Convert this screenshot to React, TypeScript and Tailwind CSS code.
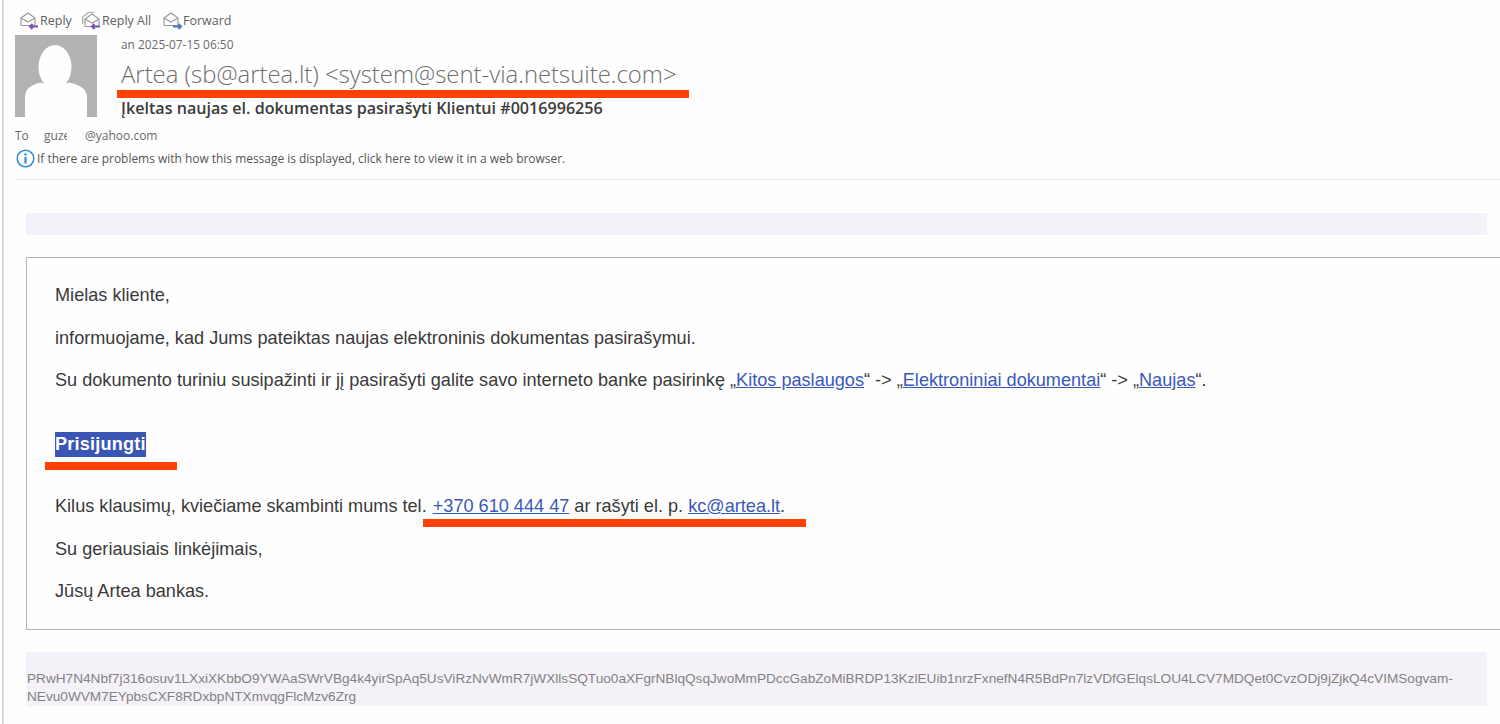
const Arrow = ({ color, dir }: { color: string; dir: "left" | "right" }) => (
  <path d={dir === "left" ? "M18 15.500h-8M12.500 13l-2.500 2.500 2.500 2.500" : "M10 15.500h8M15.500 13l2.500 2.500-2.500 2.500"} stroke={color} strokeWidth="2" fill="none" />
);

const Envelope = () => (
  <g fill="none" stroke="#9a9a9a" strokeWidth="1.200">
    <path d="M1 7 8 2l7 5v6.500a1 1 0 0 1-1 1H2a1 1 0 0 1-1-1z" />
    <path d="M1 7l7 4 7-4" />
  </g>
);

function ActionIcon({ kind }: { kind: "reply" | "all" | "forward" }) {
  return (
    <svg width="20" height="20" viewBox="0 0 20 20" className="shrink-0">
      {kind === "all" && <path d="M.7 13V6L6 1.500h6" fill="none" stroke="#a8a8a8" strokeWidth="1.200" />}
      <g transform={kind === "all" ? "translate(2 1)" : undefined}><Envelope /></g>
      <Arrow color={kind === "forward" ? "#4a78b8" : "#7a4fb5"} dir={kind === "forward" ? "right" : "left"} />
    </svg>
  );
}

function Action({ kind, label, className }: { kind: "reply" | "all" | "forward"; label: string; className: string }) {
  return (
    <div className={`flex items-center ${className}`}>
      <ActionIcon kind={kind} />
      <span className="text-[12.5px] leading-none text-[#5f5f5f]">{label}</span>
    </div>
  );
}

function Mark({ className }: { className: string }) {
  return <div className={`absolute h-2 bg-[#ff4106] ${className}`} />;
}

const linkCls = "text-[#3a58bb] underline";

export default function App() {
  return (
    <div className="relative h-[724px] w-[1500px] overflow-hidden bg-[#fefefe] font-['Liberation_Sans',Arial,sans-serif]">
      <div className="h-full border-l-2 border-[#d9d9d9] ml-[2px]">
        <header className="ml-[11px] h-[180px] border-b border-[#e4e4e4] font-['Open_Sans','Noto_Sans',sans-serif]">
          <div className="flex h-[35px] items-start pl-[5px] pt-[11px]">
            <Action kind="reply" label="Reply" className="w-[62px]" />
            <Action kind="all" label="Reply All" className="w-[81px]" />
            <Action kind="forward" label="Forward" className="w-[80px]" />
          </div>
          <div className="flex">
            <svg width="82" height="82" viewBox="0 0 82 82" className="shrink-0 bg-[#b2b2b2]">
              <ellipse cx="40" cy="32" rx="16.500" ry="22" fill="#fefefe" />
              <path d="M10 82V62c0-8 6-12 14-14 6-1.500 10 4 16 4s10-5.500 16-4c9 2 16 6 16 14v20z" fill="#fefefe" />
            </svg>
            <div className="ml-[24px] min-w-0">
              <div className="mt-[1px] text-[11.900px] leading-[16px] text-[#6a6a6a]">an 2025-07-15 06:50</div>
              <div className="mt-[5px] whitespace-nowrap text-[23.880px] font-light leading-[34px] text-[#6e6e6e]">
                Artea (sb@artea.lt) &lt;system@sent-via.netsuite.com&gt;
              </div>
              <div className="mt-[6px] whitespace-nowrap text-[16.130px] font-semibold leading-[22px] text-[#3b3b3b]">
                Įkeltas naujas el. dokumentas pasirašyti Klientui #0016996256
              </div>
            </div>
          </div>
          <div className="mt-[9px] flex text-[12px] leading-[16px] text-[#6a6a6a]">
            <span className="w-[29px]">To</span>
            <span className="mr-[18px] w-[23px] overflow-hidden">guze</span>
            <span>@yahoo.com</span>
          </div>
          <div className="mt-[5px] flex items-center text-[11.950px] leading-[18px] text-[#555]">
            <svg width="19" height="19" viewBox="0 0 19 19" className="ml-[1px] mr-[2px] shrink-0">
              <circle cx="9.500" cy="9.500" r="8.300" fill="#fff" stroke="#2a8fd6" strokeWidth="1.500" />
              <circle cx="9.500" cy="5.500" r="1.200" fill="#2a8fd6" />
              <rect x="8.400" y="8" width="2.200" height="6.500" fill="#2a8fd6" />
            </svg>
            If there are problems with how this message is displayed, click here to view it in a web browser.
          </div>
        </header>

        <main className="pl-[22px] text-[18.140px] text-[#3a3a3a]">
          <div className="mt-[33px] mr-[13px] h-[22px] bg-[#f4f2f8]" />

          <section className="mt-[22px] h-[373px] border border-r-0 border-[#b5b5b5] pl-[28px] pt-[27px] leading-[21px]">
            <p>Mielas kliente,</p>
            <p className="mt-[22px]">informuojame, kad Jums pateiktas naujas elektroninis dokumentas pasirašymui.</p>
            <p className="mt-[21px]">
              Su dokumento turiniu susipažinti ir jį pasirašyti galite savo interneto banke pasirinkę „<span className={linkCls}>Kitos paslaugos</span>“ -&gt; „<span className={linkCls}>Elektroniniai dokumentai</span>“ -&gt; „<span className={linkCls}>Naujas</span>“.
            </p>
            <p className="mt-[41px]">
              <span className="inline-block bg-[#3b55b5] font-bold leading-[25px] tracking-[0.2px] text-white">Prisijungti</span>
            </p>
            <p className="mt-[39px]">
              Kilus klausimų, kviečiame skambinti mums tel. <span className={`${linkCls} ml-[1px]`}>+370 610 444 47</span> ar rašyti el. p. <span className={linkCls}>kc@artea.lt</span>.
            </p>
            <p className="mt-[22px]">Su geriausiais linkėjimais,</p>
            <p className="mt-[21px]">Jūsų Artea bankas.</p>
          </section>

          <footer className="mt-[22px] mr-[13px] h-[54px] bg-[#f4f2f8] pl-[1px] pt-[18px] text-[13.630px] leading-[18px] text-[#828282]">
            PRwH7N4Nbf7j316osuv1LXxiXKbbO9YWAaSWrVBg4k4yirSpAq5UsViRzNvWmR7jWXllsSQTuo0aXFgrNBlqQsqJwoMmPDccGabZoMiBRDP13KzlEUib1nrzFxnefN4R5BdPn7lzVDfGElqsLOU4LCV7MDQet0CvzODj9jZjkQ4cVIMSogvam-<br />NEvu0WVM7EYpbsCXF8RDxbpNTXmvqgFlcMzv6Zrg
          </footer>
        </main>
      </div>

      <Mark className="left-[117px] top-[90px] w-[572px]" />
      <Mark className="left-[45px] top-[462px] w-[132px]" />
      <Mark className="left-[423px] top-[519px] w-[383px]" />
    </div>
  );
}
